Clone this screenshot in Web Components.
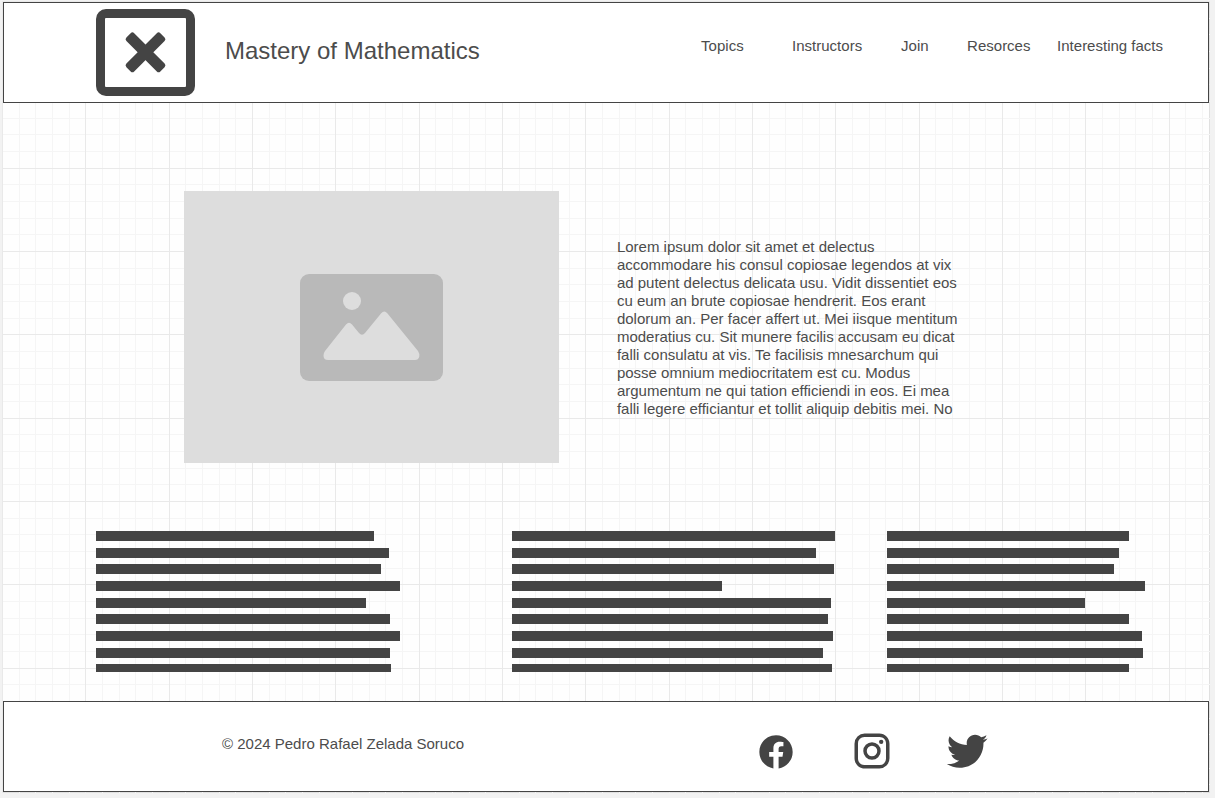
<!DOCTYPE html>
<html lang="en">
<head>
<meta charset="utf-8">
<meta name="viewport" content="width=device-width, initial-scale=1">
<title>Mastery of Mathematics</title>
<style>
  html { background: #f2f2f2; }
  body {
    margin: 0;
    padding: 1px 5px 5px 2px;
    font-family: "Liberation Sans", Arial, sans-serif;
    font-size: 15px;
    line-height: 18px;
    color: #4c4c4c;
    --ink: #444;
  }
</style>
</head>
<body>
<graph-sheet>
  <site-header slot="header" heading="Mastery of Mathematics">
    <nav-link href="#topics">Topics</nav-link>
    <nav-link href="#instructors">Instructors</nav-link>
    <nav-link href="#join">Join</nav-link>
    <nav-link href="#resources">Resorces</nav-link>
    <nav-link href="#facts">Interesting facts</nav-link>
  </site-header>
  <hero-section>Lorem ipsum dolor sit amet et delectus accommodare his consul copiosae legendos at vix ad putent delectus delicata usu. Vidit dissentiet eos cu eum an brute copiosae hendrerit. Eos erant dolorum an. Per facer affert ut. Mei iisque mentitum moderatius cu. Sit munere facilis accusam eu dicat falli consulatu at vis. Te facilisis mnesarchum qui posse omnium mediocritatem est cu. Modus argumentum ne qui tation efficiendi in eos. Ei mea falli legere efficiantur et tollit aliquip debitis mei. No</hero-section>
  <text-columns>
    <placeholder-lines widths="278 293 285 304 270 294 304 294 295"></placeholder-lines>
    <placeholder-lines widths="323 304 322 210 319 316 321 311 320"></placeholder-lines>
    <placeholder-lines widths="242 232 227 258 198 242 255 256 242"></placeholder-lines>
  </text-columns>
  <site-footer slot="footer">© 2024 Pedro Rafael Zelada Soruco</site-footer>
</graph-sheet>

<script>
const define = (name, html, setup) => {
  const template = document.createElement('template');
  template.innerHTML = html;
  customElements.define(name, class extends HTMLElement {
    constructor() {
      super();
      this.attachShadow({ mode: 'open' }).append(template.content.cloneNode(true));
    }
    connectedCallback() {
      if (setup) setup(this, this.shadowRoot);
    }
  });
};

/* Grid lines repeat every 250px: three major cells of five minor cells each. */
const gridPath = stops => stops.map(n => `M${n} 0h1v250h-1zM0 ${n}h250v1h-250z`).join('');
define('graph-sheet', `
  <style>
    :host { display: block; position: relative; background: #fefefe; border: 1px solid #e0e0e0; }
    .grid { position: absolute; inset: -1px; width: calc(100% + 2px); height: calc(100% + 2px); }
    .content { position: relative; }
    main { display: block; padding: 88px 0 29px; }
  </style>
  <svg class="grid" aria-hidden="true">
    <defs>
      <pattern id="grid" width="250" height="250" patternUnits="userSpaceOnUse">
        <path fill="#f5f5f5" d="${gridPath([17, 33, 50, 67, 100, 117, 133, 150, 183, 200, 217, 233])}"/>
        <path fill="#e9e9e9" d="${gridPath([0, 83, 167])}"/>
      </pattern>
    </defs>
    <rect width="100%" height="100%" fill="url(#grid)"/>
  </svg>
  <div class="content">
    <slot name="header"></slot>
    <main><slot></slot></main>
    <slot name="footer"></slot>
  </div>`);

define('site-header', `
  <style>
    :host { display: block; }
    header {
      box-sizing: border-box; min-height: 101px; padding: 6px 45px 6px 92px;
      display: flex; align-items: flex-start; gap: 30px;
      background: #fff; border: 1px solid var(--ink);
    }
    svg { flex: none; width: 99px; height: 87px; fill: var(--ink); }
    h1 { margin: 0; font-size: 24px; line-height: 28px; font-weight: 400; padding-top: 28px; }
    nav {
      margin-left: auto; padding-top: 28px;
      display: grid; grid-template-columns: 91px 109px 66px 90px auto;
    }
  </style>
  <header>
    <svg viewBox="0 0 99 87" role="img" aria-label="Logo">
      <path fill-rule="evenodd" d="M10 0H89A10 10 0 0 1 99 10V77A10 10 0 0 1 89 87H10A10 10 0 0 1 0 77V10A10 10 0 0 1 10 0ZM10 9A1 1 0 0 0 9 10V77A1 1 0 0 0 10 78H89A1 1 0 0 0 90 77V10A1 1 0 0 0 89 9Z"/>
      <g transform="translate(49.5 43.3) rotate(45)">
        <rect x="-24" y="-5.5" width="48" height="11" rx="2.5"/>
        <rect x="-5.5" y="-24" width="11" height="48" rx="2.5"/>
      </g>
    </svg>
    <h1></h1>
    <nav aria-label="Main"><slot></slot></nav>
  </header>`,
  (host, root) => { root.querySelector('h1').textContent = host.getAttribute('heading'); });

define('nav-link', `
  <style>
    :host { display: block; white-space: nowrap; }
    a { color: inherit; text-decoration: none; }
    a:hover { text-decoration: underline; }
  </style>
  <a><slot></slot></a>`,
  (host, root) => { root.querySelector('a').href = host.getAttribute('href'); });

define('hero-section', `
  <style>
    :host {
      display: grid; grid-template-columns: 375px minmax(0, 352px); column-gap: 58px;
      align-items: center; padding: 0 15%;
    }
    .picture { display: grid; place-items: center; height: 272px; background: #ddd; }
    svg { width: 143px; height: 107px; }
    p { margin: 0; padding-top: 2px; }
  </style>
  <div class="picture">
    <svg viewBox="0 0 143 107" role="img" aria-label="Image placeholder">
      <rect width="143" height="107" rx="9" fill="#b9b9b9"/>
      <g fill="#ddd">
        <circle cx="52" cy="27" r="9"/>
        <path d="M28 86Q23.5 86 23.5 81.5Q23.5 79 25 77L46 50.5Q49 47 52 50.5L59 59Q62 62.5 65 59L81 39.5Q84.3 35.5 87.5 39.5L118 77Q120 80 119.3 82.5Q118.5 86 115 86Z"/>
      </g>
    </svg>
  </div>
  <p><slot></slot></p>`);

define('text-columns', `
  <style>
    :host {
      display: grid; grid-template-columns: 416fr 375fr 258fr;
      padding: 68px 64px 0 93px;
    }
  </style>
  <slot></slot>`);

define('placeholder-lines', `
  <style>
    :host { display: block; height: 141px; overflow: hidden; }
    .lines { display: grid; grid-template-rows: repeat(9, 1fr); height: 150px; }
    .line { height: 10px; background: var(--ink); }
  </style>
  <div class="lines"></div>`,
  (host, root) => {
    const lines = host.getAttribute('widths').split(' ').map(width => {
      const line = document.createElement('div');
      line.className = 'line';
      line.style.width = width + 'px';
      return line;
    });
    root.querySelector('.lines').replaceChildren(...lines);
  });

define('site-footer', `
  <style>
    :host { display: block; }
    footer {
      box-sizing: border-box; min-height: 91px; padding: 26px 217px 0 218px;
      display: flex; justify-content: space-between; align-items: flex-start;
      background: #fff; border: 1px solid var(--ink);
    }
    p { margin: 0; padding-top: 7px; }
    .social { display: flex; gap: 50px; }
    a { display: grid; place-items: center; width: 46px; height: 46px; color: var(--ink); }
    svg { fill: currentColor; }
  </style>
  <footer>
    <p><slot></slot></p>
    <div class="social">
      <a href="#facebook" aria-label="Facebook"><svg width="40" height="40" viewBox="0 -0.5 24 24"><path d="M12 2.04C6.5 2.04 2 6.53 2 12.06C2 17.06 5.66 21.21 10.44 21.96V14.96H7.9V12.06H10.44V9.85C10.44 7.34 11.93 5.96 14.22 5.96C15.31 5.96 16.45 6.15 16.45 6.15V8.62H15.19C13.95 8.62 13.56 9.39 13.56 10.22V12.06H16.34L15.89 14.96H13.56V21.96A10 10 0 0 0 22 12.06C22 6.53 17.5 2.04 12 2.04Z"/></svg></a>
      <a href="#instagram" aria-label="Instagram"><svg width="42" height="42" viewBox="0 0 24 24"><path d="M7.8,2H16.2C19.4,2 22,4.6 22,7.8V16.2A5.8,5.8 0 0,1 16.2,22H7.8C4.6,22 2,19.4 2,16.2V7.8A5.8,5.8 0 0,1 7.8,2M7.6,4A3.6,3.6 0 0,0 4,7.6V16.4C4,18.39 5.61,20 7.6,20H16.4A3.6,3.6 0 0,0 20,16.4V7.6C20,5.61 18.39,4 16.4,4H7.6M17.25,5.5A1.25,1.25 0 0,1 18.5,6.75A1.25,1.25 0 0,1 17.25,8A1.25,1.25 0 0,1 16,6.75A1.25,1.25 0 0,1 17.25,5.5M12,7A5,5 0 0,1 17,12A5,5 0 0,1 12,17A5,5 0 0,1 7,12A5,5 0 0,1 12,7M12,9A3,3 0 0,0 9,12A3,3 0 0,0 12,15A3,3 0 0,0 15,12A3,3 0 0,0 12,9Z"/></svg></a>
      <a href="#twitter" aria-label="Twitter"><svg width="46" height="46" viewBox="0.6 0.6 23.6 23.6"><path d="M22.46,6C21.69,6.35 20.86,6.58 20,6.69C20.88,6.16 21.56,5.32 21.88,4.31C21.05,4.81 20.13,5.16 19.16,5.36C18.37,4.5 17.26,4 16,4C13.65,4 11.73,5.92 11.73,8.29C11.73,8.63 11.77,8.96 11.84,9.27C8.28,9.09 5.11,7.38 3,4.79C2.63,5.42 2.42,6.16 2.42,6.94C2.42,8.43 3.17,9.75 4.33,10.5C3.62,10.5 2.96,10.3 2.38,10C2.38,10 2.38,10 2.38,10.03C2.38,12.11 3.86,13.85 5.82,14.24C5.46,14.34 5.08,14.39 4.69,14.39C4.42,14.39 4.15,14.36 3.89,14.31C4.43,16 6,17.26 7.89,17.29C6.43,18.45 4.58,19.13 2.56,19.13C2.22,19.13 1.88,19.11 1.54,19.07C3.44,20.29 5.7,21 8.12,21C16,21 20.33,14.46 20.33,8.79C20.33,8.6 20.33,8.42 20.32,8.23C21.16,7.63 21.88,6.87 22.46,6Z"/></svg></a>
    </div>
  </footer>`);
</script>
</body>
</html>
